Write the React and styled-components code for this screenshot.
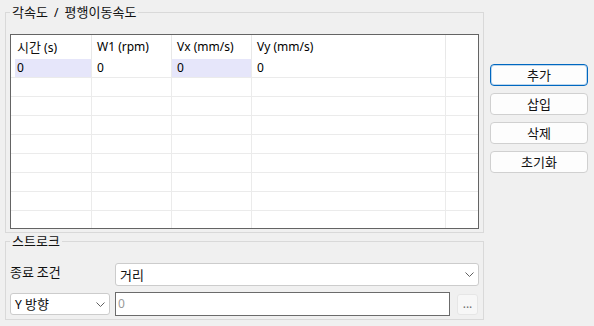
import React from "react";
import styled, { createGlobalStyle } from "styled-components";

const GlobalStyle = createGlobalStyle`
  body {
    margin: 0;
    background: #f0f0f0;
    font-family: "Noto Sans", "Noto Sans CJK KR", sans-serif;
    font-size: 12px;
    color: #000;
  }
`;

const Ko = styled.span`
  font-family: "Noto Sans CJK KR", sans-serif;
  font-size: 13px;
  color: #111;
`;

const rows = [["0", "0", "0", "0"], [], [], [], [], [], [], [], []];
const highlighted = [0, 2];

export default function App() {
  const columns = [
    <><Ko>시간</Ko> (s)</>,
    "W1 (rpm)",
    "Vx (mm/s)",
    "Vy (mm/s)",
  ];
  return (
    <>
      <GlobalStyle />
      <Window>
        <LeftColumn>
          <GroupBox $height={229} $padTop={14} $padBottom={3}>
            <Legend>
              <Ko>각속도</Ko> / <Ko>평행이동속도</Ko>
            </Legend>
            <Grid>
              {columns.map((c, i) => (
                <HeadCell key={i} $first={i === 0}>{c}</HeadCell>
              ))}
              <HeadCell $filler />
              {rows.map((r, ri) =>
                [0, 1, 2, 3, 4].map((ci) => (
                  <Cell
                    key={ri + "-" + ci}
                    $first={ci === 0}
                    $filler={ci === 4}
                    $selected={ri === 0 && highlighted.includes(ci)}
                  >
                    {r[ci]}
                  </Cell>
                ))
              )}
            </Grid>
          </GroupBox>
          <GroupBox $height={87} $padTop={14} $padBottom={3}>
            <Legend>
              <Ko>스트로크</Ko>
            </Legend>
            <Form>
              <Label>
                <Ko>종료 조건</Ko>
              </Label>
              <Combo $height={23}>
                <Ko>거리</Ko>
                <Chevron />
              </Combo>
              <Combo $height={22} $width={100}>
                <span>
                  Y <Ko>방향</Ko>
                </span>
                <Chevron />
              </Combo>
              <InputRow>
                <TextBox>0</TextBox>
                <DotsButton>...</DotsButton>
              </InputRow>
            </Form>
          </GroupBox>
        </LeftColumn>
        <ButtonColumn>
          <Button $focused><Ko>추가</Ko></Button>
          <Button><Ko>삽입</Ko></Button>
          <Button><Ko>삭제</Ko></Button>
          <Button><Ko>초기화</Ko></Button>
        </ButtonColumn>
      </Window>
    </>
  );
}

function Chevron() {
  return (
    <ChevronBox>
      <svg width="9" height="5" viewBox="0 0 9 5">
        <polyline points="0.5,0.5 4.5,4.5 8.5,0.5" fill="none" stroke="#606060" strokeWidth="1" />
      </svg>
    </ChevronBox>
  );
}

const Window = styled.div`
  display: flex;
  gap: 6px;
  width: 594px;
  height: 326px;
  box-sizing: border-box;
  padding: 4px 0 0 5px;
`;

const LeftColumn = styled.div`
  display: flex;
  flex-direction: column;
  width: 479px;
`;

const GroupBox = styled.fieldset`
  margin: 0;
  min-width: 0;
  box-sizing: border-box;
  height: ${(p) => p.$height}px;
  border: 1px solid #d9d9d9;
  padding: ${(p) => p.$padTop}px 4px ${(p) => p.$padBottom}px 4px;
`;

const Legend = styled.legend`
  padding: 0 2px;
  line-height: 16px;
  height: 16px;
  font-size: 12px;
  word-spacing: 3px;
`;

const Grid = styled.div`
  display: grid;
  grid-template-columns: 81px 80px 80px 194px 32px;
  grid-auto-rows: min-content;
  height: 195px;
  box-sizing: border-box;
  border: 1px solid #646464;
  background: #fff;
  overflow: hidden;
`;

const HeadCell = styled.div`
  height: 24px;
  line-height: 24px;
  padding-left: ${(p) => (p.$first ? 6 : 5)}px;
  border-right: ${(p) => (p.$filler ? "none" : "1px solid #e8e8e8")};
  white-space: nowrap;
`;

const Cell = styled.div`
  height: 19px;
  line-height: 18px;
  box-sizing: border-box;
  padding-left: ${(p) => (p.$first ? 6 : 5)}px;
  border-right: ${(p) => (p.$filler ? "none" : "1px solid #ebebeb")};
  border-bottom: 1px solid #ebebeb;
  background: ${(p) => (p.$selected ? "#e6e6fa" : "#fff")};
  box-shadow: ${(p) => (p.$selected && p.$first ? "inset 4px 0 0 #fff" : "none")};
`;

const Form = styled.div`
  display: grid;
  grid-template-columns: 105px 1fr;
  row-gap: 6px;
  align-items: center;
`;

const Label = styled.div`
  padding-bottom: 5px;
  line-height: 16px;
`;

const Combo = styled.div`
  display: flex;
  align-items: center;
  justify-content: space-between;
  box-sizing: border-box;
  height: ${(p) => p.$height}px;
  width: ${(p) => (p.$width ? p.$width + "px" : "auto")};
  padding-left: 4px;
  line-height: 16px;
  background: #fff;
  border: 1px solid #cccccc;
  border-radius: 3px;
`;

const ChevronBox = styled.div`
  display: flex;
  align-items: center;
  justify-content: center;
  width: 18px;
  height: 100%;
`;

const InputRow = styled.div`
  display: flex;
  align-items: center;
  gap: 7px;
`;

const TextBox = styled.div`
  flex: 1;
  box-sizing: border-box;
  height: 24px;
  line-height: 22px;
  padding-left: 2px;
  background: #fff;
  border: 1px solid #6b6b6b;
  color: #9a9a9a;
`;

const DotsButton = styled.div`
  box-sizing: border-box;
  width: 21px;
  height: 21px;
  margin-right: 1px;
  line-height: 17px;
  text-align: center;
  background: #f7f7f7;
  border: 1px solid #e6e6e6;
  border-radius: 3px;
  color: #707070;
`;

const ButtonColumn = styled.div`
  display: flex;
  flex-direction: column;
  gap: 7px;
  width: 98px;
  padding-top: 60px;
`;

const Button = styled.div`
  box-sizing: border-box;
  height: 22px;
  line-height: 20px;
  text-align: center;
  background: #fdfdfd;
  border: 1px solid ${(p) => (p.$focused ? "#0067c0" : "#d0d0d0")};
  box-shadow: ${(p) => (p.$focused ? "inset 0 0 0 1px rgba(0,103,192,0.25)" : "none")};
  border-radius: 4px;
`;
